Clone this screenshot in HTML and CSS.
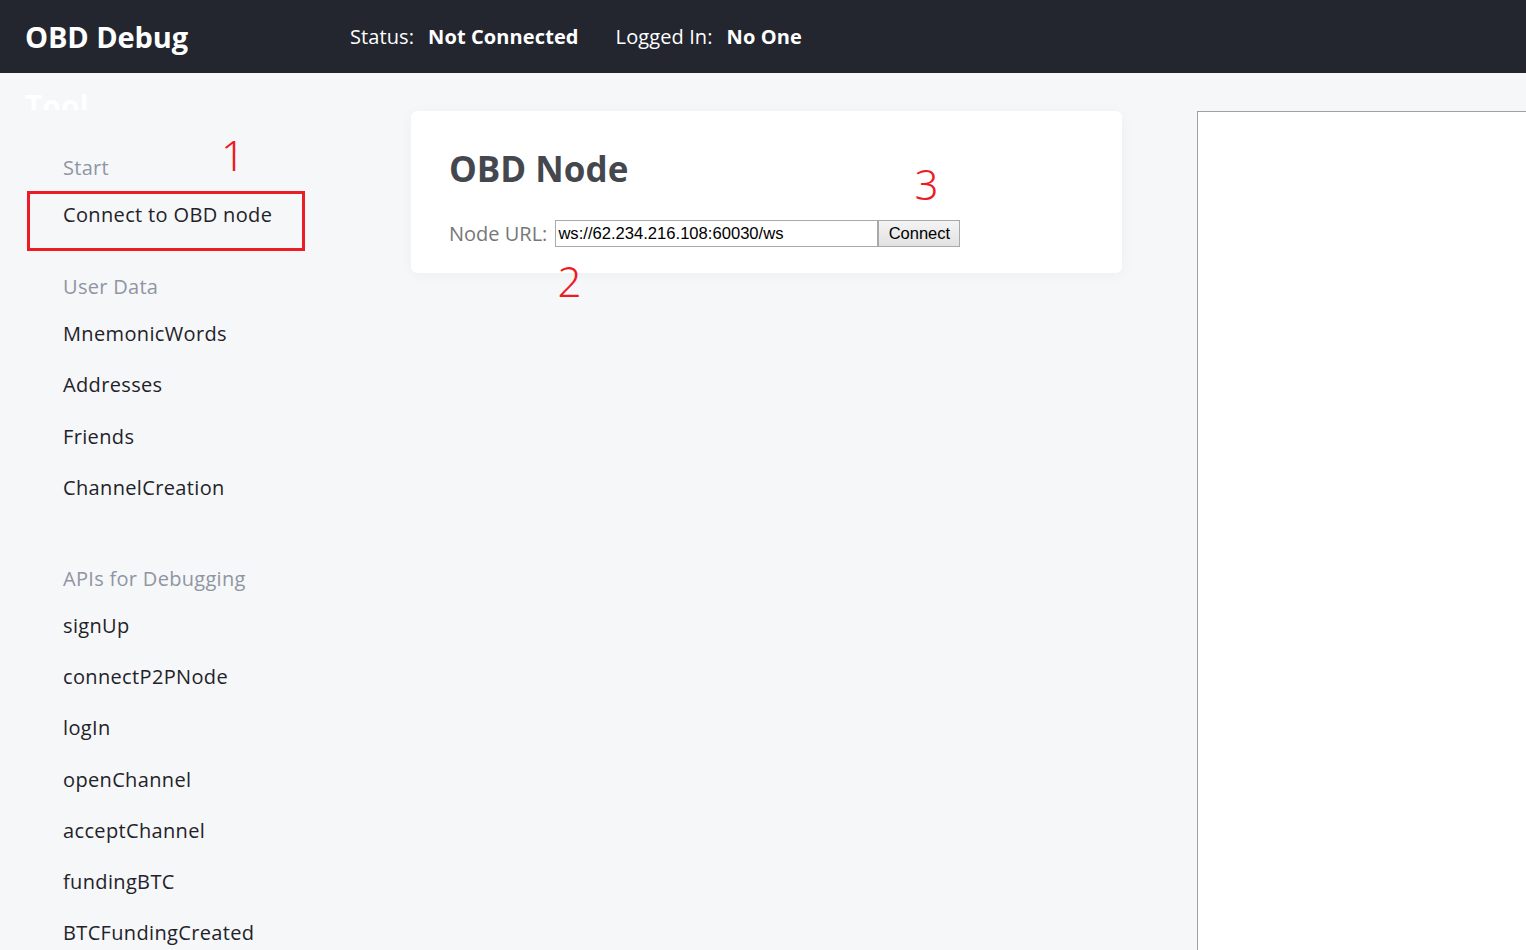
FILE: index.html
```html
<!DOCTYPE html>
<html>
<head>
<meta charset="utf-8">
<title>OBD Debug</title>
<link rel="stylesheet" href="styles.css">
</head>
<body>
<header class="topbar">
  <div class="logo">OBD Debug</div>
  <div class="status">
    <span class="label">Status:</span><span class="value">Not Connected</span>
  </div>
  <div class="status">
    <span class="label">Logged In:</span><span class="value">No One</span>
  </div>
</header>
<div class="main">
  <aside class="sidebar">
    <div class="sidebar-title">Tool</div>
    <nav class="nav">
      <div class="nav-head">Start<span class="mark mark-1">1</span></div>
      <div class="nav-item nav-active">Connect to OBD node<span class="mark-box"></span></div>
      <div class="nav-head sec">User Data</div>
      <div class="nav-item">MnemonicWords</div>
      <div class="nav-item">Addresses</div>
      <div class="nav-item">Friends</div>
      <div class="nav-item">ChannelCreation</div>
      <div class="nav-head sec-big">APIs for Debugging</div>
      <div class="nav-item">signUp</div>
      <div class="nav-item">connectP2PNode</div>
      <div class="nav-item">logIn</div>
      <div class="nav-item">openChannel</div>
      <div class="nav-item">acceptChannel</div>
      <div class="nav-item">fundingBTC</div>
      <div class="nav-item">BTCFundingCreated</div>
    </nav>
  </aside>
  <section class="content">
    <div class="card">
      <h2 class="card-title">OBD Node</h2>
      <div class="form-row">
        <span class="form-label">Node URL:</span>
        <span class="field-wrap">
          <input class="url-input" type="text" value="ws://62.234.216.108:60030/ws">
          <span class="mark mark-2">2</span>
        </span>
        <span class="btn-wrap">
          <button class="btn">Connect</button>
          <span class="mark mark-3">3</span>
        </span>
      </div>
    </div>
  </section>
  <section class="output"></section>
</div>
</body>
</html>
```
FILE: styles.css
```css
html, body {
  margin: 0;
  padding: 0;
  height: 100%;
  overflow: hidden;
}
body {
  background: #f6f7f9;
  font-family: "Open Sans", "Noto Sans", sans-serif;
  color: #1f2329;
}
.topbar {
  height: 73px;
  background: #23262f;
  display: flex;
  align-items: center;
  padding-left: 25px;
  color: #fff;
  box-sizing: border-box;
}
.logo {
  font-size: 29px;
  font-weight: 700;
  width: 325px;
  letter-spacing: -0.1px;
}
.status {
  font-size: 20px;
  margin-right: 37px;
  display: flex;
  align-items: baseline;
  letter-spacing: 0.1px;
}
.status .label {
  margin-right: 14px;
}
.status .value {
  font-weight: 700;
}
.main {
  display: flex;
  align-items: flex-start;
  height: calc(100% - 73px);
}
.sidebar {
  width: 411px;
  flex: none;
  padding-left: 25px;
  box-sizing: border-box;
}
.sidebar-title {
  height: 37px;
  overflow: hidden;
  color: #fff;
  font-size: 30px;
  font-weight: 700;
  line-height: 1;
  padding-top: 18px;
  box-sizing: border-box;
}
.nav {
  padding-left: 38px;
  padding-top: 36px;
}
.nav-head {
  position: relative;
  font-size: 20px;
  line-height: 43px;
  color: #8f95a3;
  letter-spacing: 0.3px;
}
.nav-head.sec {
  margin-top: 25px;
}
.nav-head.sec-big {
  margin-top: 44px;
}
.nav-item {
  position: relative;
  font-size: 20px;
  line-height: 51.2px;
  color: #1f2329;
  letter-spacing: 0.35px;
}
.mark {
  position: absolute;
  color: #ed1c24;
  font-family: "Noto Sans", sans-serif;
  font-size: 42px;
  font-weight: 300;
  line-height: 1;
  letter-spacing: 0;
}
.mark-1 {
  left: 158px;
  top: -12px;
}
.mark-box {
  position: absolute;
  left: -36px;
  top: 2px;
  width: 278px;
  height: 60px;
  border: 3px solid #ed1c24;
  box-sizing: border-box;
}
.content {
  width: 711px;
  flex: none;
  padding-top: 38px;
}
.card {
  background: #fff;
  border-radius: 6px;
  box-shadow: 0 2px 14px rgba(0, 0, 0, 0.04);
  height: 162px;
  box-sizing: border-box;
  padding: 30px 38px 0;
}
.card-title {
  margin: 0;
  font-size: 35px;
  font-weight: 700;
  color: #45474e;
  line-height: 56px;
}
.form-row {
  margin-top: 23px;
  display: flex;
  align-items: center;
}
.form-label {
  font-size: 20px;
  color: #777;
  margin-right: 8px;
}
.field-wrap, .btn-wrap {
  position: relative;
  display: inline-flex;
}
.url-input {
  width: 323px;
  height: 27px;
  box-sizing: border-box;
  border: 1px solid #a9a9a9;
  padding: 0 2px;
  font-family: "Liberation Sans", Arial, sans-serif;
  font-size: 16.6px;
  color: #000;
  margin: 0;
  outline: none;
}
.btn {
  width: 82px;
  height: 27px;
  box-sizing: border-box;
  border: 1px solid #a9a9a9;
  background: linear-gradient(#f4f4f4, #e2e2e2);
  font-family: "Liberation Sans", Arial, sans-serif;
  font-size: 16.5px;
  color: #000;
  margin: 0;
  padding: 0;
}
.mark-2 {
  left: 2px;
  top: 40px;
}
.mark-3 {
  left: 36px;
  top: -57px;
}
.output {
  flex: 1;
  margin-left: 75px;
  margin-top: 38px;
  height: 900px;
  background: #fff;
  border-top: 1px solid #a0a0a0;
  border-left: 1px solid #a0a0a0;
}
```
